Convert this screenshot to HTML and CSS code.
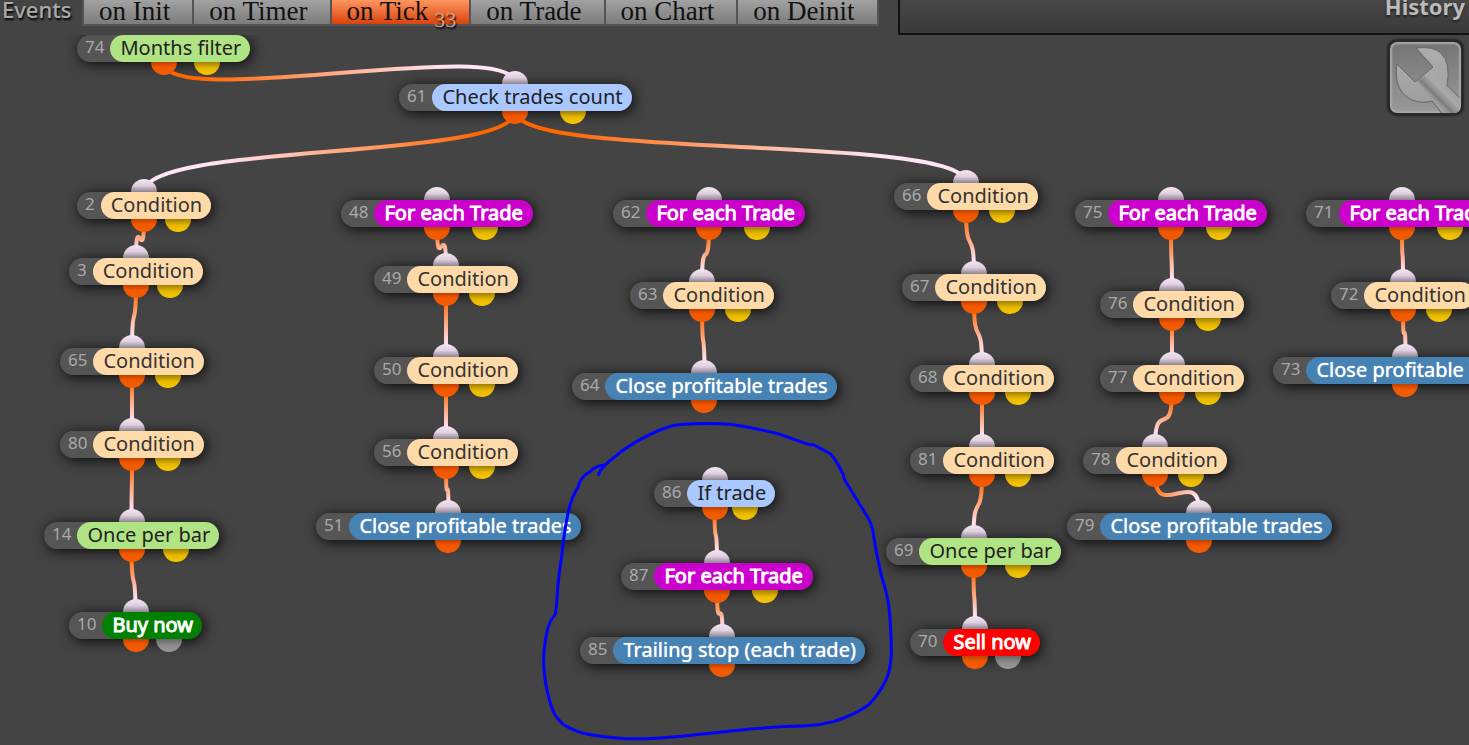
FILE: index.html
```html
<!DOCTYPE html>
<html lang="en">
<head>
    <meta charset="UTF-8">
    <meta name="viewport" content="width=device-width, initial-scale=1.0">
    <title>Events</title>
    <link rel="stylesheet" href="styles.css">
</head>
<body>
    <header class="topbar">
        <div class="events">
            <h1 class="events-title">Events</h1>
            <nav class="tabs">
                <button type="button" class="tab">on Init</button>
                <button type="button" class="tab">on Timer</button>
                <button type="button" class="tab active">on Tick<span class="count">33</span></button>
                <button type="button" class="tab">on Trade</button>
                <button type="button" class="tab">on Chart</button>
                <button type="button" class="tab">on Deinit</button>
            </nav>
        </div>
        <div class="history">
            <h2 class="history-title">History</h2>
        </div>
    </header>

    <main class="canvas" id="canvas">
        <svg class="wires" id="wires"></svg>

        <svg class="marker" viewBox="0 0 1080 975">
            <path d="M176 164 Q178 150 210 122 L250 90 Q300 55 360 30 Q400 14 430 13 Q500 8 570 13 Q640 22 720 43 L805 73 L822 75 L872 102 Q890 122 910 165 L913 178 L945 230 L985 295 Q996 315 999 335 Q1008 400 1025 470 Q1045 535 1048 570 Q1054 640 1054 700 Q1052 750 1038 780 Q1015 825 990 850 Q960 878 880 905 Q840 916 800 917 L720 920 L630 927 L440 947 Q340 958 260 956 Q180 952 130 940 Q90 927 68 912 Q46 890 40 875 Q18 820 12 750 Q8 700 20 640 Q28 600 45 585 Q50 565 52 520 Q55 470 65 410 Q72 340 82 290 Q92 235 115 200 Q119 180 135 165 L150 155 Q172 135 192 136"/>
        </svg>

        <button type="button" class="tools" aria-label="Tools">
            <svg viewBox="0 0 70 70">
                <defs>
                    <linearGradient id="metal" x1="0" y1="0" x2="0" y2="1">
                        <stop offset="0" stop-color="#adadad"/>
                        <stop offset="1" stop-color="#9c9c9c"/>
                    </linearGradient>
                    <linearGradient id="handle" gradientUnits="userSpaceOnUse" x1="60" y1="42" x2="43" y2="59">
                        <stop offset="0" stop-color="#a8a8a8" stop-opacity="0"/>
                        <stop offset="0.4" stop-color="#aaa"/>
                        <stop offset="0.75" stop-color="#7c7c7c"/>
                        <stop offset="1" stop-color="#a0a0a0" stop-opacity="0"/>
                    </linearGradient>
                </defs>
                <path class="wrench" fill="url(#metal)" d="M26 5 Q43 3 51 10 Q61 20 57 43 L72 57 V72 H53 L42 58 Q31 61 22 57 Q3 48 7 21 L25 39 L43 24 Z"/>
                <path fill="url(#handle)" d="M27 38 L42 26 L71 57 V71 H54 L42 58 Z"/>
            </svg>
        </button>
    </main>

    <script src="script.js"></script>
</body>
</html>
```
FILE: styles.css
```css
* {
    margin: 0;
    padding: 0;
    box-sizing: border-box;
}

body {
    display: flex;
    flex-direction: column;
    height: 100vh;
    overflow: hidden;
    background: #444;
    font-family: "Noto Sans", "Open Sans", sans-serif;
}

/* top bar */
.topbar {
    display: flex;
    flex: none;
    height: 35px;
}

.events {
    display: flex;
    flex: none;
    align-items: flex-start;
    height: 26px;
    padding-left: 2px;
}

.events-title {
    width: 80px;
    color: #aaa;
    font-size: 22px;
    font-weight: 500;
    line-height: 18px;
    text-shadow: 1px 2px 2px #000;
}

.tabs {
    display: flex;
    gap: 2px;
    height: 26px;
    padding: 0 2px 2px;
    background: #555;
}

.tab {
    height: 24px;
    padding: 0 22px 2px 15px;
    border: none;
    background: linear-gradient(#a2a2a2, #7c7c7c);
    color: #111;
    font-family: "Liberation Serif", serif;
    font-size: 27px;
    line-height: 22px;
    white-space: nowrap;
    cursor: pointer;
}

.tab.active {
    padding-right: 13px;
    background: linear-gradient(#ff9560, #d9430c);
}

.count {
    position: relative;
    top: 7px;
    margin-left: 6px;
    color: #d9a080;
    font-size: 22px;
    line-height: 16px;
    text-shadow: 1px 2px 2px #000;
}

.history {
    flex: 1;
    margin-left: 19px;
    padding-right: 4px;
    border-left: 2px solid #111;
    border-bottom: 2px solid #111;
    background: linear-gradient(#474747, #3a3a3a);
    text-align: right;
}

.history-title {
    color: #bbb;
    font-size: 22px;
    font-weight: 700;
    line-height: 12px;
    text-shadow: 0 2px 2px #222;
}

/* canvas */
.canvas {
    position: relative;
    flex: 1;
    overflow: hidden;
}

.wires {
    position: absolute;
    top: 0;
    left: 0;
    z-index: 2;
    width: 100%;
    height: 100%;
    overflow: visible;
    fill: none;
    stroke-width: 4;
    pointer-events: none;
}

.marker {
    position: absolute;
    top: 385px;
    left: 540px;
    z-index: 5;
    width: 360px;
    height: 325px;
    fill: none;
    stroke: #00f;
    stroke-width: 9;
    stroke-linecap: round;
    stroke-linejoin: round;
    pointer-events: none;
}

/* blocks */
.block {
    position: absolute;
    display: flex;
    height: 27px;
    white-space: nowrap;
}

.block::before {
    content: "";
    position: absolute;
    inset: 0;
    z-index: 1;
    border-radius: 14px;
    box-shadow: 2px 2px 14px rgba(0, 0, 0, 0.9);
}

.block-id {
    position: relative;
    z-index: 4;
    margin-right: -14px;
    padding: 0 20px 0 8px;
    border-radius: 14px 0 0 14px;
    background: #555;
    color: #aaa;
    font-size: 17px;
    line-height: 24px;
}

.block-label {
    position: relative;
    z-index: 4;
    padding: 0 9px 0 10px;
    border-radius: 14px;
    font-size: 20px;
    line-height: 26px;
}

.condition .block-label {
    background: #ffdaa9;
    color: #333;
}

.filter .block-label {
    background: #b0e383;
    color: #222;
}

.check .block-label {
    background: #a9c8ff;
    color: #222;
}

.loop .block-label {
    padding-right: 10px;
    background: #c0c;
    color: #fff;
    -webkit-text-stroke: 1px #fff;
}

.action .block-label {
    background: #4682b4;
    color: #fff;
    text-shadow: 0 0 1px #fff;
}

.buy .block-label {
    background: #008000;
    color: #fff;
    -webkit-text-stroke: 1px #fff;
}

.sell .block-label {
    background: #f00;
    color: #fff;
    -webkit-text-stroke: 1px #fff;
}

.port {
    position: absolute;
    left: 50%;
    z-index: 3;
    width: 26px;
    height: 13px;
    margin-left: -13px;
}

.port.in {
    bottom: 100%;
    border-radius: 13px 13px 0 0;
    background: linear-gradient(#f4e4f4, #e0d0e0 50%, #8d838d);
}

.port.out {
    top: 100%;
    border-radius: 0 0 13px 13px;
    background: linear-gradient(#c04000, #f05800 40%, #f65c00);
}

.port.alt {
    left: 75%;
    background: linear-gradient(#a08000, #e8b800 50%, #f8c800);
}

.port.off {
    left: 75%;
    background: linear-gradient(#666, #8c8c8c 50%, #999);
}

/* tools button */
.tools {
    position: absolute;
    top: 4px;
    right: 5px;
    z-index: 6;
    width: 77px;
    height: 77px;
    border: 3px solid #2a2a2a;
    border-radius: 10px;
    background: linear-gradient(#747474, #999);
    box-shadow: inset 0 0 2px 2px #aaa, 0 0 2px #222;
    overflow: hidden;
    cursor: pointer;
}

.tools svg {
    display: block;
    width: 70px;
    height: 70px;
}

.wrench {
    stroke: #666;
    stroke-width: 1;
}
```
FILE: script.js
```javascript
// id, type, label, x, y, second output port
const blocks = [
    [74, 'filter', 'Months filter', 77, 0, 'alt'],
    [61, 'check', 'Check trades count', 399, 49, 'alt'],
    [2, 'condition', 'Condition', 77, 157, 'alt'],
    [3, 'condition', 'Condition', 69, 223, 'alt'],
    [65, 'condition', 'Condition', 60, 313, 'alt'],
    [80, 'condition', 'Condition', 60, 396, 'alt'],
    [14, 'filter', 'Once per bar', 44, 487, 'alt'],
    [10, 'buy', 'Buy now', 69, 577, 'off'],
    [48, 'loop', 'For each Trade', 341, 165, 'alt'],
    [49, 'condition', 'Condition', 374, 231, 'alt'],
    [50, 'condition', 'Condition', 374, 322, 'alt'],
    [56, 'condition', 'Condition', 374, 404, 'alt'],
    [51, 'action', 'Close profitable trades', 316, 478, ''],
    [62, 'loop', 'For each Trade', 613, 165, 'alt'],
    [63, 'condition', 'Condition', 630, 247, 'alt'],
    [64, 'action', 'Close profitable trades', 572, 338, ''],
    [86, 'check', 'If trade', 654, 445, 'alt'],
    [87, 'loop', 'For each Trade', 621, 528, 'alt'],
    [85, 'action', 'Trailing stop (each trade)', 580, 602, ''],
    [66, 'condition', 'Condition', 894, 148, 'alt'],
    [67, 'condition', 'Condition', 902, 239, 'alt'],
    [68, 'condition', 'Condition', 910, 330, 'alt'],
    [81, 'condition', 'Condition', 910, 412, 'alt'],
    [69, 'filter', 'Once per bar', 886, 503, 'alt'],
    [70, 'sell', 'Sell now', 910, 594, 'off'],
    [75, 'loop', 'For each Trade', 1075, 165, 'alt'],
    [76, 'condition', 'Condition', 1100, 256, 'alt'],
    [77, 'condition', 'Condition', 1100, 330, 'alt'],
    [78, 'condition', 'Condition', 1083, 412, 'alt'],
    [79, 'action', 'Close profitable trades', 1067, 478, ''],
    [71, 'loop', 'For each Trade', 1306, 165, 'alt'],
    [72, 'condition', 'Condition', 1331, 247, 'alt'],
    [73, 'action', 'Close profitable trades', 1273, 322, '']
];

const links = [
    [74, 61], [61, 2], [61, 66],
    [2, 3], [3, 65], [65, 80], [80, 14], [14, 10],
    [48, 49], [49, 50], [50, 56], [56, 51],
    [62, 63], [63, 64],
    [86, 87], [87, 85],
    [66, 67], [67, 68], [68, 81], [81, 69], [69, 70],
    [75, 76], [76, 77], [77, 78], [78, 79],
    [71, 72], [72, 73]
];

const canvas = document.getElementById('canvas');
const wires = document.getElementById('wires');
const elements = {};

blocks.forEach(function([id, type, label, x, y, second]) {
    const el = document.createElement('div');
    el.className = `block ${type}`;
    el.style.left = x + 'px';
    el.style.top = y + 'px';
    el.innerHTML = `
        ${id === 74 ? '' : '<i class="port in"></i>'}
        <span class="block-id">${id}</span>
        <span class="block-label">${label}</span>
        <i class="port out"></i>
        ${second ? `<i class="port out ${second}"></i>` : ''}`;
    canvas.appendChild(el);
    elements[id] = el;
});

// Wires leave and enter the blocks vertically
const bend = 50;

wires.innerHTML = links.map(function([from, to]) {
    const a = elements[from];
    const b = elements[to];
    const x1 = a.offsetLeft + a.offsetWidth / 2;
    const y1 = a.offsetTop + a.offsetHeight;
    const x2 = b.offsetLeft + b.offsetWidth / 2;
    const y2 = b.offsetTop;
    const id = `wire-${from}-${to}`;
    return `
        <linearGradient id="${id}" gradientUnits="userSpaceOnUse" x1="${x1}" y1="${y1}" x2="${x2}" y2="${y2}">
            <stop offset="0.1" stop-color="#ff6600"/>
            <stop offset="0.8" stop-color="#ffe4f4"/>
        </linearGradient>
        <path stroke="url(#${id})" d="M${x1} ${y1} C${x1} ${y1 + bend} ${x2} ${y2 - bend} ${x2} ${y2}"/>`;
}).join('');
```
